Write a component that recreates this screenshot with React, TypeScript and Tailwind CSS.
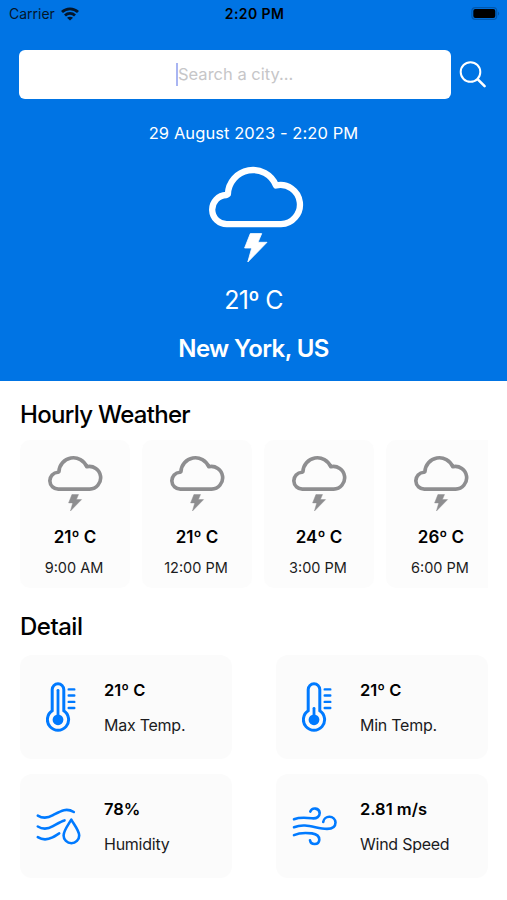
import { useState } from 'react';

interface HourlyItem {
  time: string;
  temp: string;
}

const hourly: HourlyItem[] = [
  { time: '9:00 AM', temp: '21º C' },
  { time: '12:00 PM', temp: '21º C' },
  { time: '3:00 PM', temp: '24º C' },
  { time: '6:00 PM', temp: '26º C' },
];

function StormIcon({ className }: { className?: string }) {
  return (
    <svg viewBox="0 0 95 97" className={className} fill="none">
      <path
        d="M18.3 58.2A14.6 14.6 0 0 1 17.3 29L18.9 28A25 25 0 0 1 67 19.5A19.6 19.6 0 1 1 72 58.2Z"
        stroke="currentColor"
        strokeWidth="6.3"
        strokeLinejoin="round"
      />
      <path
        d="M41.3 67.6H52.7L49 76.3H58L38.8 96L42.7 82H35.6Z"
        fill="currentColor"
        stroke="currentColor"
        strokeWidth="0.8"
        strokeLinejoin="round"
      />
    </svg>
  );
}

function ThermometerIcon({ level }: { level: 'max' | 'min' }) {
  return (
    <svg viewBox="0 0 30 50" className="h-[50px] w-[30px]" fill="none" stroke="currentColor" strokeLinecap="round">
      <path d="M6.2 28.8V7.6a5.8 5.8 0 0 1 11.6 0V28.8a10.6 10.6 0 1 1 -11.6 0z" strokeWidth="3" />
      <path d={level === 'max' ? 'M12 8.3V38' : 'M12 26.3V38'} strokeWidth="2.8" />
      <circle cx="12" cy="37.8" r="5.4" fill="currentColor" stroke="none" />
      <path d="M22.7 7.4h5.6M22.7 13.5h5.6M22.7 19.9h5.6M22.7 26h5.6" strokeWidth="2.4" />
    </svg>
  );
}

function HumidityIcon() {
  return (
    <svg viewBox="0 0 46 38" className="h-[38px] w-[46px]" fill="none" stroke="currentColor" strokeWidth="2.6" strokeLinecap="round">
      <path d="M1.8 8.6C6 11.2 11 11.6 17 8.2C24 4.4 30 0.2 37.8 5" />
      <path d="M1.8 19.5C6 22.1 11 22.6 17 19.2C21 17 24.5 14.4 28.5 13.4" />
      <path d="M1.8 30.2C6 32.8 11 33.2 16.5 30.4C19 29.2 21 27.6 23.2 26.4" />
      <path d="M35.3 12.6C32.5 17.5 27.6 23.6 27.6 28.4a7.8 7.8 0 0 0 15.6 0C43.2 23.6 38.1 17.5 35.3 12.6z" strokeLinejoin="round" />
    </svg>
  );
}

function WindIcon() {
  return (
    <svg viewBox="0 0 46 42" className="h-[42px] w-[46px]" fill="none" stroke="currentColor" strokeWidth="2.6" strokeLinecap="round">
      <path d="M2 14.2C8 12 14 12.6 20 13.3C25 13.8 27.7 11.4 27.7 8A4.9 4.9 0 0 0 18.3 6.6" />
      <path d="M2 22.2C14 17.6 24 23.8 35 23.9C41 23.8 43.5 21 43.5 17.4A6.2 6.2 0 0 0 31.2 17" />
      <path d="M2 30.1C6 28.3 13 27.6 20 28.4C24.5 29 27.3 31.2 27.3 34.8A4.7 4.7 0 0 1 18 35.2" />
    </svg>
  );
}

const details = [
  { label: 'Max Temp.', value: '21º C', icon: <ThermometerIcon level="max" /> },
  { label: 'Min Temp.', value: '21º C', icon: <ThermometerIcon level="min" /> },
  { label: 'Humidity', value: '78%', icon: <HumidityIcon /> },
  { label: 'Wind Speed', value: '2.81 m/s', icon: <WindIcon /> },
];

function StatusBar() {
  return (
    <div className="grid h-[27px] grid-cols-3 items-center pr-[7px] pl-[9px] text-[14px] text-[#04162b]">
      <div className="flex items-center gap-[6px]">
        <span>Carrier</span>
        <svg viewBox="0 0 18 14" className="h-[14px] w-[18px]" fill="none" stroke="currentColor" strokeWidth="2.8">
          <path d="M1 5.1C5.4 0.8 12.6 0.8 17 5.1" />
          <path d="M4 8.4C6.8 5.7 11.2 5.7 14 8.4" />
          <path d="M9 13.6L6 10.8C7.7 9.4 10.3 9.4 12 10.8Z" fill="currentColor" stroke="none" />
        </svg>
      </div>
      <span className="text-center font-semibold tracking-[0.4px] text-black">2:20 PM</span>
      <svg viewBox="0 0 29 13" className="h-[13px] w-[29px] justify-self-end">
        <rect x="0.9" y="0.7" width="24.8" height="11.6" rx="3.4" fill="none" stroke="#0058ae" strokeWidth="1.2" />
        <rect x="2.3" y="2.1" width="22" height="8.8" rx="2" fill="#000" />
        <path d="M27 4.4C28.6 5.2 28.6 7.8 27 8.6Z" fill="#0058ae" />
      </svg>
    </div>
  );
}

export default function App() {
  const [city, setCity] = useState('');

  return (
    <div className="h-[900px] w-[507px] overflow-hidden bg-white font-[Inter,'Liberation_Sans',sans-serif] text-black">
      <header className="flex h-[381px] flex-col bg-[#0074e4] text-white">
        <StatusBar />

        <div className="mt-[23px] flex items-center pr-[20px] pl-[19px]">
          <label className="flex h-[49px] w-[432px] items-center justify-center rounded-[6px] bg-white">
            <span className="h-[23px] w-[2px] bg-[#a9b5f2]" />
            <input
              value={city}
              onChange={(e) => setCity(e.target.value)}
              placeholder="Search a city..."
              className="w-[116px] bg-transparent text-[16.5px] text-black outline-none placeholder:text-[#c6c6c8]"
            />
          </label>
          <svg viewBox="0 0 28 28" className="ml-[8px] size-[28px]" fill="none" stroke="currentColor" strokeLinecap="round">
            <circle cx="11.5" cy="11" r="9.8" strokeWidth="2" />
            <path d="M18.8 18.4L25.6 25.2" strokeWidth="2.6" />
          </svg>
        </div>

        <div className="flex flex-col items-center">
          <p className="mt-[24px] text-[16.5px] leading-[20px] tracking-[0.08px]">29 August 2023 - 2:20 PM</p>
          <StormIcon className="mt-[23px] ml-[5px] h-[97px] w-[95px]" />
          <p className="mt-[21px] text-[25px] leading-[32px] tracking-[-0.7px]">21º C</p>
          <h1 className="mt-[17px] text-[24px] leading-[32px] font-semibold tracking-[-0.6px]">New York, US</h1>
        </div>
      </header>

      <main className="pr-[19px] pl-[20px]">
        <h2 className="pt-[19px] text-[24px] leading-[30px] font-medium tracking-[-0.7px]">Hourly Weather</h2>
        <div className="mt-[10px] flex gap-[12px] overflow-hidden">
          {hourly.map((item) => (
            <div key={item.time} className="flex h-[148px] w-[110px] shrink-0 flex-col items-center rounded-[10px] bg-[#fcfcfc]">
              <StormIcon className="mt-[15px] ml-[1px] h-[57px] w-[55px] text-[#8e8e90]" />
              <p className="mt-[15px] text-[17px] leading-[20px] font-semibold">{item.temp}</p>
              <p className="mt-[12px] -ml-[2px] text-[14.5px] leading-[18px] text-[#1c1c1e]">{item.time}</p>
            </div>
          ))}
        </div>

        <h2 className="mt-[24px] text-[24px] leading-[30px] font-medium tracking-[-0.5px]">Detail</h2>
        <div className="mt-[13px] grid grid-cols-[212px_212px] gap-x-[44px] gap-y-[15px]">
          {details.map((item) => (
            <div key={item.label} className="flex h-[104px] items-center rounded-[12px] bg-[#fbfbfb]">
              <div className="flex w-[84px] justify-center pr-[5px] text-[#007aff]">
                <div className={item.label.includes('Temp') ? 'ml-[3px]' : '-ml-[2px]'}>{item.icon}</div>
              </div>
              <div>
                <p className="text-[16.5px] leading-[20px] font-semibold">{item.value}</p>
                <p className="mt-[15px] text-[16px] leading-[20px] tracking-[-0.25px] text-[#1c1c1e]">{item.label}</p>
              </div>
            </div>
          ))}
        </div>
      </main>
    </div>
  );
}
